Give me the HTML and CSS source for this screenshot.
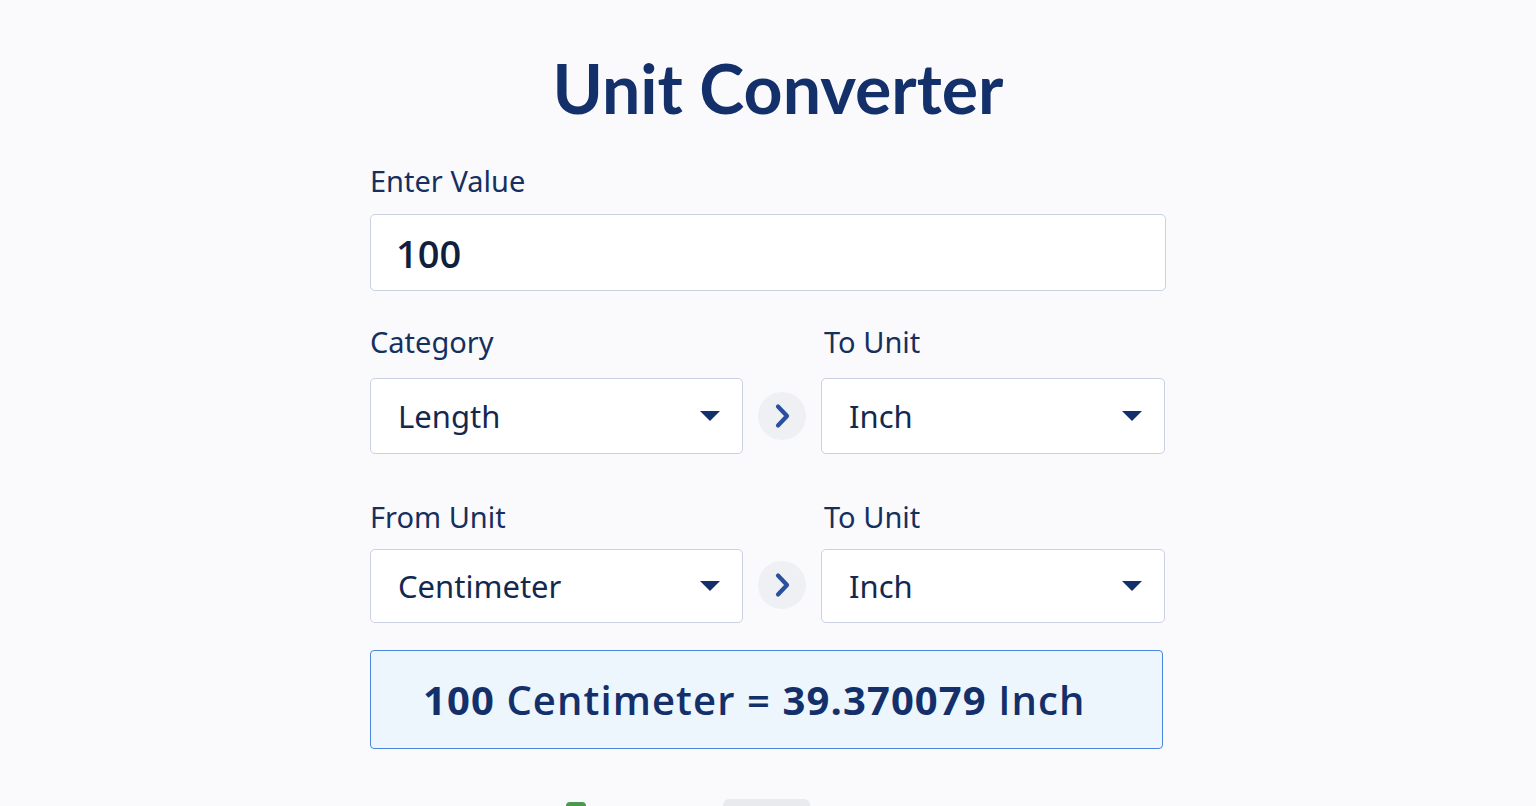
FILE: index.html
```html
<!DOCTYPE html>
<html lang="en">
<head>
  <meta charset="UTF-8" />
  <meta name="viewport" content="width=device-width, initial-scale=1.0"/>
  <title>Unit Converter</title>
  <link rel="stylesheet" href="styles.css">
</head>
<body>

  <main class="converter">
    <h1>Unit Converter</h1>

    <label class="field-label" for="value">Enter Value</label>
    <div class="box input-box">
      <input type="text" id="value" value="100" />
    </div>

    <div class="pair first">
      <div class="col">
        <span class="field-label">Category</span>
        <div class="box select-box">
          <span>Length</span>
          <span class="caret"></span>
        </div>
      </div>
      <div class="arrow">
        <svg width="22" height="28" viewBox="0 0 22 28"><path d="M7 4.5l9 9.5-9 9.5" fill="none" stroke="#2a4f9e" stroke-width="4.2" stroke-linecap="round" stroke-linejoin="round"/></svg>
      </div>
      <div class="col">
        <span class="field-label right">To Unit</span>
        <div class="box select-box">
          <span>Inch</span>
          <span class="caret"></span>
        </div>
      </div>
    </div>

    <div class="pair second">
      <div class="col">
        <span class="field-label">From Unit</span>
        <div class="box select-box">
          <span>Centimeter</span>
          <span class="caret"></span>
        </div>
      </div>
      <div class="arrow">
        <svg width="22" height="28" viewBox="0 0 22 28"><path d="M7 4.5l9 9.5-9 9.5" fill="none" stroke="#2a4f9e" stroke-width="4.2" stroke-linecap="round" stroke-linejoin="round"/></svg>
      </div>
      <div class="col">
        <span class="field-label right">To Unit</span>
        <div class="box select-box">
          <span>Inch</span>
          <span class="caret"></span>
        </div>
      </div>
    </div>

    <div class="result">
      <b>100</b>&nbsp;Centimeter&nbsp;=&nbsp;<b>39.370079</b>&nbsp;Inch
    </div>

    <div class="footer">
      <span class="dot"></span>
      <span class="chip"></span>
    </div>
  </main>

</body>
</html>
```

FILE: styles.css
```css
body {
  margin: 0;
  font-family: "Noto Sans", "Open Sans", sans-serif;
  background-color: #fafafc;
  color: #14305f;
  height: 806px;
  overflow: hidden;
}
.converter {
  width: 796px;
  margin: 0 auto;
  padding-top: 48px;
}
h1 {
  margin: 0 0 35px;
  padding-left: 20px;
  text-align: center;
  font-family: "Lato", "Noto Sans", sans-serif;
  font-size: 68px;
  font-weight: 700;
  line-height: 80px;
  color: #14306a;
}
.field-label {
  display: block;
  font-size: 29px;
  line-height: 36px;
  margin-bottom: 15px;
  color: #15305e;
}
.field-label.right {
  padding-left: 3px;
}
.box {
  background: #fff;
  border: 1.5px solid #cad1e3;
  border-radius: 5px;
  box-sizing: border-box;
}
.input-box {
  height: 77px;
  padding: 0 25px;
  display: flex;
  align-items: center;
  margin-bottom: 33px;
}
.input-box input {
  border: none;
  outline: none;
  background: transparent;
  font-family: "Open Sans", sans-serif;
  font-size: 38px;
  font-weight: 600;
  color: #0f1f3d;
  width: 100%;
  padding: 0;
}
.pair {
  display: grid;
  grid-template-columns: 373px 48px 344px;
  column-gap: 15px;
  align-items: end;
}
.first {
  margin-bottom: 45px;
}
.first .field-label {
  margin-bottom: 18px;
}
.first .select-box {
  height: 76px;
}
.second {
  margin-bottom: 27px;
}
.second .field-label {
  margin-bottom: 14px;
}
.second .select-box {
  height: 74px;
}
.select-box {
  display: flex;
  align-items: center;
  justify-content: space-between;
  padding: 0 22px 0 27px;
  font-size: 31px;
  color: #14284f;
}
.caret {
  width: 0;
  height: 0;
  border-left: 10px solid transparent;
  border-right: 10px solid transparent;
  border-top: 10px solid #14306a;
}
.arrow {
  width: 48px;
  height: 48px;
  border-radius: 50%;
  background: #eef0f4;
  display: flex;
  align-items: center;
  justify-content: center;
  margin-bottom: 14px;
}
.result {
  height: 99px;
  box-sizing: border-box;
  margin-right: 3px;
  background: #edf5fd;
  border: 1.5px solid #4c86de;
  border-radius: 4px;
  display: flex;
  align-items: center;
  padding-left: 52px;
  font-family: "Open Sans", sans-serif;
  font-size: 40px;
  font-weight: 600;
  letter-spacing: 1.1px;
  color: #14306a;
}
.result b {
  font-weight: 700;
}
.footer {
  position: relative;
  height: 8px;
  margin-top: 49px;
  overflow: hidden;
}
.dot {
  position: absolute;
  left: 196px;
  top: 4px;
  width: 20px;
  height: 12px;
  border-radius: 4px;
  background: #4a9a4e;
}
.chip {
  position: absolute;
  left: 353px;
  top: 1px;
  width: 87px;
  height: 30px;
  border-radius: 6px;
  background: #e8eaee;
}
```
